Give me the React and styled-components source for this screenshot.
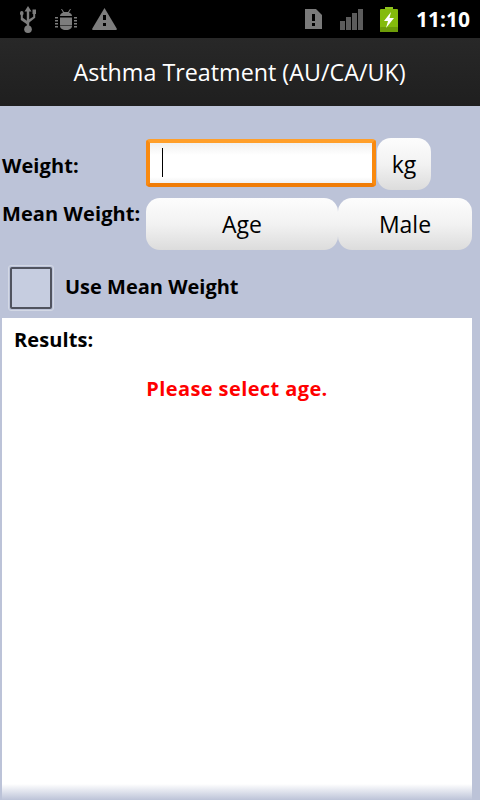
import React from 'react';
import styled, { createGlobalStyle } from 'styled-components';

const Global = createGlobalStyle`
  html, body { margin: 0; padding: 0; background: #bcc3d8; }
  body { font-family: "Open Sans", "Noto Sans", sans-serif; }
`;

const Screen = styled.div`
  position: relative;
  width: 480px;
  height: 800px;
  overflow: hidden;
  display: flex;
  flex-direction: column;
  background: #bcc3d8;
`;

const StatusBar = styled.div`
  height: 38px;
  flex: none;
  background: #000;
  display: flex;
  align-items: center;
  padding: 0 10px 0 20px;
  box-sizing: border-box;
`;

const StatusGroup = styled.div`
  display: flex;
  align-items: center;
  margin-left: ${(p) => (p.$end ? 'auto' : '0')};
`;

const IconSlot = styled.span`
  display: flex;
  margin-left: ${(p) => p.$ml || 0}px;
`;

const Clock = styled.span`
  color: #fff;
  font-weight: 700;
  font-size: 21px;
  line-height: 38px;
  margin-left: 18px;
`;

const TitleBar = styled.div`
  height: 68px;
  flex: none;
  background: linear-gradient(#282828, #1f1f1f);
  color: #fff;
  font-size: 23.300px;
  display: flex;
  align-items: center;
  justify-content: center;
  padding-right: 1px;
  box-sizing: border-box;
`;

const Form = styled.div`
  flex: none;
  padding-top: 32px;
`;

const Row = styled.div`
  display: flex;
  align-items: ${(p) => p.$align || 'center'};
  height: 52px;
  margin-bottom: 8px;
`;

const Label = styled.label`
  width: 146px;
  flex: none;
  padding-left: 2px;
  box-sizing: border-box;
  font-weight: 700;
  font-size: 20px;
  line-height: 28px;
  letter-spacing: 0.1px;
  color: #000;
  white-space: nowrap;
  margin-top: ${(p) => p.$top || 0}px;
`;

const WeightInput = styled.div`
  width: 230px;
  height: 48px;
  flex: none;
  box-sizing: border-box;
  border: 4px solid;
  border-color: #ff9f2a #f98a10 #f07c06 #f98a10;
  border-radius: 4px;
  background: linear-gradient(#f0f0f0, #fff 30%, #fff 85%, #f2f2f2);
  padding: 5px 0 0 12px;
  margin-bottom: 2px;
`;

const Caret = styled.div`
  width: 1px;
  height: 29px;
  background: #000;
`;

const Button = styled.div`
  width: ${(p) => p.$w}px;
  height: 52px;
  flex: none;
  margin-left: ${(p) => p.$ml || 0}px;
  box-sizing: border-box;
  border-radius: 14px;
  background: linear-gradient(#fdfdfd, #f2f2f2 50%, #dcdcdc);
  color: #000;
  font-size: 23px;
  display: flex;
  align-items: center;
  justify-content: center;
`;

const CheckRow = styled.div`
  display: flex;
  align-items: center;
  height: 46px;
  padding-left: 8px;
  margin-top: 7px;
`;

const CheckBox = styled.div`
  width: 46px;
  height: 46px;
  flex: none;
  box-sizing: border-box;
  border: 1px solid #d3d8e5;
  border-radius: 3px;
  padding: 1px;
  background: #bcc3d8;
  & > div {
    width: 100%;
    height: 100%;
    box-sizing: border-box;
    border: 2px solid #50535f;
    border-radius: 2px;
    background: #c6cde0;
  }
`;

const CheckLabel = styled.span`
  margin-left: 11px;
  padding-bottom: 4px;
  font-weight: 700;
  font-size: 20px;
  color: #000;
`;

const Results = styled.div`
  flex: 1;
  margin: 7px 8px 0 2px;
  background: #fff;
  padding: 8px 12px;
`;

const ResultsTitle = styled.div`
  font-weight: 700;
  font-size: 20px;
  line-height: 28px;
  letter-spacing: 0.1px;
  color: #000;
`;

const Message = styled.div`
  margin-top: 21px;
  text-align: center;
  font-weight: 700;
  font-size: 20px;
  line-height: 28px;
  letter-spacing: 0.4px;
  color: #f00;
`;

const BottomFade = styled.div`
  position: absolute;
  left: 0;
  right: 0;
  bottom: 0;
  height: 16px;
  background: linear-gradient(rgba(188, 195, 216, 0), #bcc3d8);
`;

const UsbIcon = () => (
  <svg width="16" height="27" viewBox="0 0 16 27" fill="#7d7d7d">
    <path d="M8 0l3.500 5.500H9.200V20H6.800V5.500H4.500z" />
    <circle cx="8" cy="23.200" r="3.800" />
    <rect x="0" y="5" width="3.500" height="4.500" rx="1.700" />
    <path d="M.8 9h2v2.800L8 15.500v3.500L.8 14z" />
    <rect x="12.500" y="3.500" width="3.500" height="4.500" />
    <path d="M13.200 8h2v3.800L8 17.500V14l5.200-3.200z" />
  </svg>
);

const BugIcon = () => (
  <svg width="22" height="21" viewBox="0 0 22 21" fill="#7d7d7d">
    <path d="M6 0l1 0 2 3h4l2-3 1 0-2 3.500c2 .8 3 2.300 3 3.500H5c0-1.200 1-2.700 3-3.500z" />
    <rect x="5" y="8.500" width="12" height="8" />
    <path d="M5 17h12c0 2-2 4-6 4s-6-2-6-4z" />
    <rect x="0" y="8" width="3" height="1.500" />
    <rect x="0" y="11" width="3" height="1.500" />
    <rect x="0" y="14" width="3" height="1.500" />
    <rect x="0" y="17" width="3" height="1.500" />
    <rect x="19" y="8" width="3" height="1.500" />
    <rect x="19" y="11" width="3" height="1.500" />
    <rect x="19" y="14" width="3" height="1.500" />
    <rect x="19" y="17" width="3" height="1.500" />
  </svg>
);

const WarningIcon = () => (
  <svg width="25" height="22" viewBox="0 0 25 22">
    <path d="M12.500 0L24.700 20.500c.3.800 0 1.500-.8 1.500H1.100c-.8 0-1.100-.7-.8-1.500z" fill="#7d7d7d" />
    <rect x="11" y="7" width="3" height="5" fill="#000" />
    <rect x="11" y="15" width="3" height="3" fill="#000" />
  </svg>
);

const SimIcon = () => (
  <svg width="17" height="20" viewBox="0 0 17 20">
    <path d="M0 0h11l6 6v14H0z" fill="#7a7a7a" />
    <rect x="7" y="5" width="3" height="7" fill="#000" />
    <rect x="7" y="14" width="3" height="3" fill="#000" />
  </svg>
);

const SignalIcon = () => (
  <svg width="23" height="21" viewBox="0 0 23 21" fill="#5c5c5c">
    <rect x="0" y="12" width="5" height="9" />
    <rect x="6" y="8" width="5" height="13" />
    <rect x="12" y="4" width="5" height="17" />
    <rect x="18" y="0" width="5" height="21" />
  </svg>
);

const BatteryIcon = () => (
  <svg width="18" height="25" viewBox="0 0 18 25">
    <rect x="5" y="0" width="8" height="3" fill="#8fc31f" />
    <rect x="0" y="2" width="18" height="23" rx="1" fill="#84bb0c" />
    <rect x="0" y="20" width="18" height="5" rx="1" fill="#6d9c08" />
    <path d="M11 5L4 14h4l-2 7 8-10H9.500z" fill="#fff" />
  </svg>
);

export default function App() {
  return (
    <Screen>
      <Global />
      <StatusBar>
        <StatusGroup>
          <IconSlot><UsbIcon /></IconSlot>
          <IconSlot $ml={19}><BugIcon /></IconSlot>
          <IconSlot $ml={15}><WarningIcon /></IconSlot>
        </StatusGroup>
        <StatusGroup $end>
          <IconSlot><SimIcon /></IconSlot>
          <IconSlot $ml={18}><SignalIcon /></IconSlot>
          <IconSlot $ml={17}><BatteryIcon /></IconSlot>
          <Clock>11:10</Clock>
        </StatusGroup>
      </StatusBar>
      <TitleBar>Asthma Treatment (AU/CA/UK)</TitleBar>
      <Form>
        <Row>
          <Label $top={4}>Weight:</Label>
          <WeightInput>
            <Caret />
          </WeightInput>
          <Button $w={54} $ml={1}>kg</Button>
        </Row>
        <Row $align="flex-start">
          <Label $top={2}>Mean Weight:</Label>
          <Button $w={192}>Age</Button>
          <Button $w={134}>Male</Button>
        </Row>
      </Form>
      <CheckRow>
        <CheckBox>
          <div />
        </CheckBox>
        <CheckLabel>Use Mean Weight</CheckLabel>
      </CheckRow>
      <Results>
        <ResultsTitle>Results:</ResultsTitle>
        <Message>Please select age.</Message>
      </Results>
      <BottomFade />
    </Screen>
  );
}
